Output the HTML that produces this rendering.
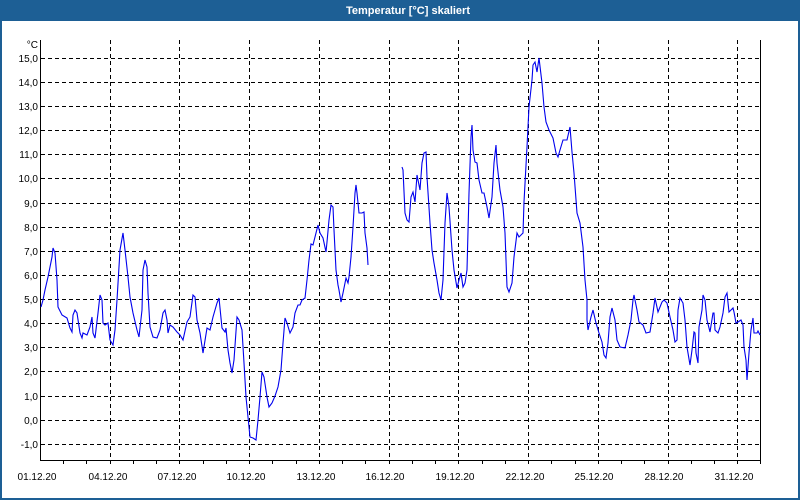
<!DOCTYPE html>
<html><head><meta charset="utf-8"><style>
html,body{margin:0;padding:0;background:#fff;}
.w{position:relative;width:800px;height:500px;overflow:hidden;}
</style></head><body><div class="w">
<svg width="800" height="500" xmlns="http://www.w3.org/2000/svg" font-family="Liberation Sans, sans-serif">
<rect x="0" y="0" width="800" height="500" fill="#1d5f95"/>
<rect x="2" y="21" width="796" height="477" fill="#ffffff"/>
<text x="408" y="14" fill="#fff" font-size="11" font-weight="bold" text-anchor="middle">Temperatur [°C] skaliert</text>
<g stroke="#000" stroke-width="1" stroke-dasharray="4,3" shape-rendering="crispEdges">
<line x1="41" x2="760" y1="58.5" y2="58.5"/><line x1="41" x2="760" y1="82.5" y2="82.5"/><line x1="41" x2="760" y1="106.5" y2="106.5"/><line x1="41" x2="760" y1="130.5" y2="130.5"/><line x1="41" x2="760" y1="154.5" y2="154.5"/><line x1="41" x2="760" y1="178.5" y2="178.5"/><line x1="41" x2="760" y1="203.5" y2="203.5"/><line x1="41" x2="760" y1="227.5" y2="227.5"/><line x1="41" x2="760" y1="251.5" y2="251.5"/><line x1="41" x2="760" y1="275.5" y2="275.5"/><line x1="41" x2="760" y1="299.5" y2="299.5"/><line x1="41" x2="760" y1="323.5" y2="323.5"/><line x1="41" x2="760" y1="347.5" y2="347.5"/><line x1="41" x2="760" y1="371.5" y2="371.5"/><line x1="41" x2="760" y1="396.5" y2="396.5"/><line x1="41" x2="760" y1="420.5" y2="420.5"/><line x1="41" x2="760" y1="444.5" y2="444.5"/>
<line y1="40" y2="460" x1="110.5" x2="110.5"/><line y1="40" y2="460" x1="179.5" x2="179.5"/><line y1="40" y2="460" x1="249.5" x2="249.5"/><line y1="40" y2="460" x1="319.5" x2="319.5"/><line y1="40" y2="460" x1="389.5" x2="389.5"/><line y1="40" y2="460" x1="458.5" x2="458.5"/><line y1="40" y2="460" x1="528.5" x2="528.5"/><line y1="40" y2="460" x1="598.5" x2="598.5"/><line y1="40" y2="460" x1="668.5" x2="668.5"/><line y1="40" y2="460" x1="737.5" x2="737.5"/>
</g>
<g stroke="#000" stroke-width="1" shape-rendering="crispEdges" fill="none">
<polyline points="40.5,40 40.5,460.5 760.5,460.5 760.5,40"/>
<path d="M63.5,460v4M86.5,460v4M110.5,460v4M133.5,460v4M156.5,460v4M179.5,460v4M203.5,460v4M226.5,460v4M249.5,460v4M272.5,460v4M296.5,460v4M319.5,460v4M342.5,460v4M365.5,460v4M389.5,460v4M412.5,460v4M435.5,460v4M458.5,460v4M482.5,460v4M505.5,460v4M528.5,460v4M551.5,460v4M575.5,460v4M598.5,460v4M621.5,460v4M644.5,460v4M668.5,460v4M691.5,460v4M714.5,460v4M737.5,460v4M760.5,460v4"/>
</g>
<g font-size="10" fill="#000" text-anchor="end">
<text x="38" y="48">°C</text>
<text x="38" y="62">15,0</text><text x="38" y="86">14,0</text><text x="38" y="110">13,0</text><text x="38" y="134">12,0</text><text x="38" y="158">11,0</text><text x="38" y="182">10,0</text><text x="38" y="207">9,0</text><text x="38" y="231">8,0</text><text x="38" y="255">7,0</text><text x="38" y="279">6,0</text><text x="38" y="303">5,0</text><text x="38" y="327">4,0</text><text x="38" y="351">3,0</text><text x="38" y="375">2,0</text><text x="38" y="400">1,0</text><text x="38" y="424">0,0</text><text x="38" y="448">-1,0</text>
</g>
<g font-size="10" fill="#000" text-anchor="middle">
<text x="37" y="480">01.12.20</text><text x="108" y="480">04.12.20</text><text x="177" y="480">07.12.20</text><text x="246" y="480">10.12.20</text><text x="316" y="480">13.12.20</text><text x="385" y="480">16.12.20</text><text x="455" y="480">19.12.20</text><text x="525" y="480">22.12.20</text><text x="594" y="480">25.12.20</text><text x="664" y="480">28.12.20</text><text x="734" y="480">31.12.20</text>
</g>
<g stroke="#0000ee" stroke-width="1.1" fill="none">
<polyline points="41,307 43,300 45,290 48,277 52,257 53,248 55,253 57,280 58,307 62,315 67,318 70,328 72,332 73,315 75,310 77,313 80,333 82,338 83,333 87,335 90,327 92,317 93,333 95,338 98,313 100,295 102,300 103,323 105,325 108,323 110,340 113,345 115,330 117,300 120,250 123,233 125,250 128,277 130,297 133,313 137,330 139,337 142,310 143,270 145,260 147,267 148,293 150,327 153,337 157,338 160,330 163,313 165,310 167,320 168,333 170,325 173,327 177,332 180,335 183,340 187,322 190,317 193,295 195,297 197,320 200,333 203,353 207,328 210,330 213,317 217,303 219,298 222,328 225,332 226,328 228,350 230,363 232,373 234,360 237,317 239,320 242,330 244,363 246,397 248,417 250,437 253,438 256,440 258,420 260,397 262,372 264,377 267,397 269,407 272,403 275,396 278,387 281,370 283,343 285,318 287,323 290,333 293,327 295,313 298,305 300,305 302,300 305,298 307,280 309,260 311,244 313,245 316,233 318,225 320,233 323,238 326,252 327,242 329,220 331,205 333,207 334,230 336,270 338,285 339,290 341,302 343,293 346,278 348,283 349,277 351,257 353,227 355,193 356,185 357,193 359,213 362,213 364,212 365,233 367,248 368,265"/>
<polyline points="402,167 403,170 405,213 407,220 409,222 411,197 413,192 415,202 417,175 420,190 422,163 424,153 426,152 427,177 430,223 432,250 434,263 437,280 439,293 441,300 443,280 445,223 447,193 449,207 452,250 454,270 457,288 459,280 461,273 463,287 465,283 467,270 469,193 471,137 472,125 473,150 475,162 477,163 479,180 482,193 484,193 487,207 489,218 492,197 494,163 496,145 497,163 500,190 503,207 505,233 507,287 509,292 512,283 514,257 517,233 519,237 523,233 524,202 527,147 529,107 532,80 533,65 535,62 537,72 539,58 542,83 544,107 546,122 549,130 553,138 556,153 558,157 560,150 563,140 567,140 570,127 572,152 574,173 577,213 580,223 583,247 585,280 587,300 587,320 588,330 591,317 593,310 596,323 599,333 602,342 604,355 606,358 608,343 610,317 612,308 615,320 617,340 620,347 625,348 628,335 631,320 633,300 634,295 637,310 639,322 643,325 646,333 650,332 653,313 655,298 658,312 662,302 664,300 667,303 670,317 673,330 675,342 677,340 678,310 680,298 683,303 685,320 687,347 690,365 692,350 694,332 695,333 696,353 698,363 699,327 702,310 703,295 705,300 707,320 710,332 713,313 714,313 715,330 718,333 720,327 723,313 725,297 727,293 729,312 731,310 733,308 734,312 736,323 738,322 741,320 743,325 744,347 746,360 747,380 749,353 751,330 753,318 754,333 757,333 758,331 760,335"/>
</g>
</svg>
</div></body></html>
